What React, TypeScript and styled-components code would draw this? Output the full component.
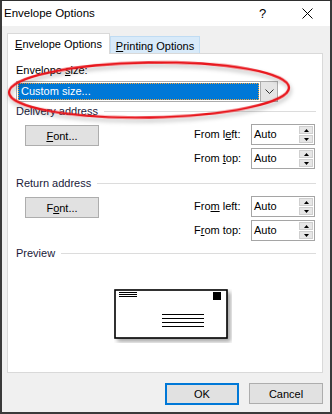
import styled, { createGlobalStyle } from "styled-components";

const GlobalStyle = createGlobalStyle`
  html, body {
    margin: 0;
    padding: 0;
    background: #ffffff;
  }
  body {
    font-family: "Liberation Sans", Arial, sans-serif;
    font-size: 11px;
    color: #000;
  }
  * {
    box-sizing: border-box;
  }
`;

const Window = styled.div`
  position: relative;
  width: 332px;
  height: 414px;
  background: #f0f0f0;
  border-top: 1px solid #2f2f2f;
  border-left: 2px solid #3a3a3a;
  border-right: 2px solid #3a3a3a;
  border-bottom: 2px solid #3a3a3a;
  display: flex;
  flex-direction: column;
  overflow: hidden;
`;

const TitleBar = styled.div`
  height: 25px;
  background: #ffffff;
  display: flex;
  align-items: center;
  padding-left: 2px;
`;

const TitleText = styled.div`
  flex: 1;
  font-size: 11.5px;
  line-height: 25px;
`;

const TitleButton = styled.div`
  width: 45px;
  height: 25px;
  display: flex;
  align-items: center;
  justify-content: center;
  font-size: 13px;
`;

const Body = styled.div`
  flex: 1;
  display: flex;
  flex-direction: column;
  padding: 7px 5px 0 5px;
`;

const TabStrip = styled.div`
  display: flex;
  align-items: flex-end;
  height: 20px;
  position: relative;
  z-index: 1;
`;

const Tab = styled.div<{ $active?: boolean }>`
  display: flex;
  align-items: center;
  justify-content: center;
  height: ${(p) => (p.$active ? "21px" : "17px")};
  margin-bottom: ${(p) => (p.$active ? "-1px" : "0")};
  width: ${(p) => (p.$active ? "103px" : "90px")};
  background: ${(p) => (p.$active ? "#ffffff" : "#d8eaf9")};
  border: 1px solid ${(p) => (p.$active ? "#d9d9d9" : "#c0dcf3")};
  border-bottom: none;
  padding-top: ${(p) => (p.$active ? "0" : "1px")};
  align-self: flex-end;
`;

const Panel = styled.div`
  width: 316px;
  height: 320px;
  background: #ffffff;
  border: 1px solid #d9d9d9;
  padding: 9px 6px 0 8px;
  display: flex;
  flex-direction: column;
`;

const Label = styled.div`
  line-height: 15px;
  white-space: nowrap;
`;

const Combo = styled.div`
  margin-top: 3px;
  width: 262px;
  height: 21px;
  border: 1px solid #acacac;
  display: flex;
  background: #ffffff;
`;

const ComboValue = styled.div`
  flex: 1;
  margin: 1px;
  background: #0078d7;
  border: 1px dotted #f6a53a;
  color: #ffffff;
  padding-left: 2px;
  line-height: 15px;
`;

const ComboArrow = styled.div`
  width: 17px;
  background: #e5e5e5;
  border-left: 1px solid #acacac;
  display: flex;
  align-items: center;
  justify-content: center;
`;

const GroupHeader = styled.div<{ $gap: number }>`
  display: flex;
  align-items: center;
  gap: 6px;
  margin-top: ${(p) => p.$gap}px;
  line-height: 15px;
  color: #1a1a3a;
`;

const Rule = styled.div`
  flex: 1;
  height: 1px;
  background: #dcdcdc;
`;

const GroupBody = styled.div`
  margin-top: 5px;
  display: flex;
  justify-content: space-between;
  padding-right: 1px;
`;

const PushButton = styled.div<{ $default?: boolean }>`
  width: ${(p) => (p.$default ? "74px" : "74px")};
  height: ${(p) => (p.$default ? "22px" : "21px")};
  background: #e1e1e1;
  border: ${(p) => (p.$default ? "2px solid #0078d7" : "1px solid #adadad")};
  display: flex;
  align-items: center;
  justify-content: center;
`;

const FontButton = styled(PushButton)`
  margin-left: 9px;
  margin-top: 1px;
`;

const Offsets = styled.div`
  display: grid;
  grid-template-columns: 57px 64px;
  row-gap: 3px;
  align-items: center;
`;

const Spinner = styled.div`
  height: 21px;
  border: 1px solid #a5a5a5;
  display: flex;
  align-items: stretch;
  background: #ffffff;
`;

const SpinnerValue = styled.div`
  flex: 1;
  padding-left: 2px;
  line-height: 19px;
`;

const SpinnerButtons = styled.div`
  width: 14px;
  margin: 1px 1px 1px 0;
  display: flex;
  flex-direction: column;
  gap: 1px;
`;

const SpinnerButton = styled.div`
  flex: 1;
  background: #e6e6e6;
  border: 1px solid #cfcfcf;
  display: flex;
  align-items: center;
  justify-content: center;
`;

const PreviewArea = styled.div`
  margin-top: 28px;
  margin-left: 98px;
`;

const Footer = styled.div`
  display: flex;
  justify-content: flex-end;
  gap: 10px;
  padding: 10px 2px 0 0;
`;

const Overlay = styled.svg`
  position: absolute;
  left: -2px;
  top: -1px;
  pointer-events: none;
`;

const Arrow = ({ up }: { up?: boolean }) => (
  <svg width="5" height="3" viewBox="0 0 5 3">
    <polygon points={up ? "0,3 5,3 2.5,0" : "0,0 5,0 2.5,3"} fill="#000" />
  </svg>
);

const OffsetRow = ({ label, value }: { label: React.ReactNode; value: string }) => (
  <>
    <Label>{label}</Label>
    <Spinner>
      <SpinnerValue>{value}</SpinnerValue>
      <SpinnerButtons>
        <SpinnerButton>
          <Arrow up />
        </SpinnerButton>
        <SpinnerButton>
          <Arrow />
        </SpinnerButton>
      </SpinnerButtons>
    </Spinner>
  </>
);

const Envelope = () => (
  <svg width="118" height="54" viewBox="0 0 118 54">
    <defs>
      <filter id="envShadow" x="-10%" y="-20%" width="130%" height="150%">
        <feDropShadow dx="3" dy="3" stdDeviation="2" floodColor="#000" floodOpacity="0.35" />
      </filter>
    </defs>
    <rect x="1" y="1" width="112" height="48" fill="#fff" stroke="#000" strokeWidth="1.6" filter="url(#envShadow)" />
    <line x1="5" y1="3.5" x2="23" y2="3.5" stroke="#000" strokeWidth="1" />
    <line x1="5" y1="5.5" x2="23" y2="5.5" stroke="#000" strokeWidth="1" />
    <line x1="5" y1="7.5" x2="23" y2="7.5" stroke="#000" strokeWidth="1" />
    <rect x="99" y="3" width="8" height="8" fill="#000" />
    <line x1="48" y1="25.5" x2="90" y2="25.5" stroke="#000" strokeWidth="1.2" />
    <line x1="48" y1="29.5" x2="90" y2="29.5" stroke="#000" strokeWidth="1.2" />
    <line x1="48" y1="33.5" x2="90" y2="33.5" stroke="#000" strokeWidth="1.2" />
    <line x1="48" y1="37.5" x2="90" y2="37.5" stroke="#000" strokeWidth="1.2" />
  </svg>
);

const App = () => {
  return (
    <>
      <GlobalStyle />
      <Window>
        <TitleBar>
          <TitleText>Envelope Options</TitleText>
          <TitleButton>?</TitleButton>
          <TitleButton>
            <svg width="11" height="11" viewBox="0 0 11 11">
              <path d="M0.5 0.5 L10.5 10.5 M10.5 0.5 L0.5 10.5" stroke="#000" strokeWidth="1" />
            </svg>
          </TitleButton>
        </TitleBar>

        <Body>
          <TabStrip>
            <Tab $active>
              <span>
                <u>E</u>nvelope Options
              </span>
            </Tab>
            <Tab>
              <span>
                <u>P</u>rinting Options
              </span>
            </Tab>
          </TabStrip>

          <Panel>
            <Label>
              Envelope <u>s</u>ize:
            </Label>
            <Combo>
              <ComboValue>Custom size...</ComboValue>
              <ComboArrow>
                <svg width="9" height="5" viewBox="0 0 9 5">
                  <path d="M0.5 0.5 L4.5 4.5 L8.5 0.5" stroke="#333" strokeWidth="1" fill="none" />
                </svg>
              </ComboArrow>
            </Combo>

            <GroupHeader $gap={2}>
              <span>Delivery address</span>
              <Rule />
            </GroupHeader>
            <GroupBody>
              <FontButton>
                <span>
                  <u>F</u>ont...
                </span>
              </FontButton>
              <Offsets>
                <OffsetRow
                  label={
                    <>
                      From l<u>e</u>ft:
                    </>
                  }
                  value="Auto"
                />
                <OffsetRow
                  label={
                    <>
                      From <u>t</u>op:
                    </>
                  }
                  value="Auto"
                />
              </Offsets>
            </GroupBody>

            <GroupHeader $gap={7}>
              <span>Return address</span>
              <Rule />
            </GroupHeader>
            <GroupBody>
              <FontButton>
                <span>
                  F<u>o</u>nt...
                </span>
              </FontButton>
              <Offsets>
                <OffsetRow
                  label={
                    <>
                      Fro<u>m</u> left:
                    </>
                  }
                  value="Auto"
                />
                <OffsetRow
                  label={
                    <>
                      F<u>r</u>om top:
                    </>
                  }
                  value="Auto"
                />
              </Offsets>
            </GroupBody>

            <GroupHeader $gap={5}>
              <span>Preview</span>
              <Rule />
            </GroupHeader>
            <PreviewArea>
              <Envelope />
            </PreviewArea>
          </Panel>

          <Footer>
            <PushButton $default>OK</PushButton>
            <PushButton>Cancel</PushButton>
          </Footer>
        </Body>

        <Overlay width="332" height="414" viewBox="0 0 332 414">
          <defs>
            <filter id="ringShadow" x="-5%" y="-30%" width="110%" height="160%">
              <feDropShadow dx="1" dy="3" stdDeviation="2" floodColor="#000" floodOpacity="0.3" />
            </filter>
          </defs>
          <ellipse
            cx="149"
            cy="90"
            rx="140"
            ry="27.5"
            fill="none"
            stroke="#e8141b"
            strokeWidth="2.4"
            transform="rotate(-1 149 90)"
            filter="url(#ringShadow)"
          />
        </Overlay>
      </Window>
    </>
  );
};

export default App;
